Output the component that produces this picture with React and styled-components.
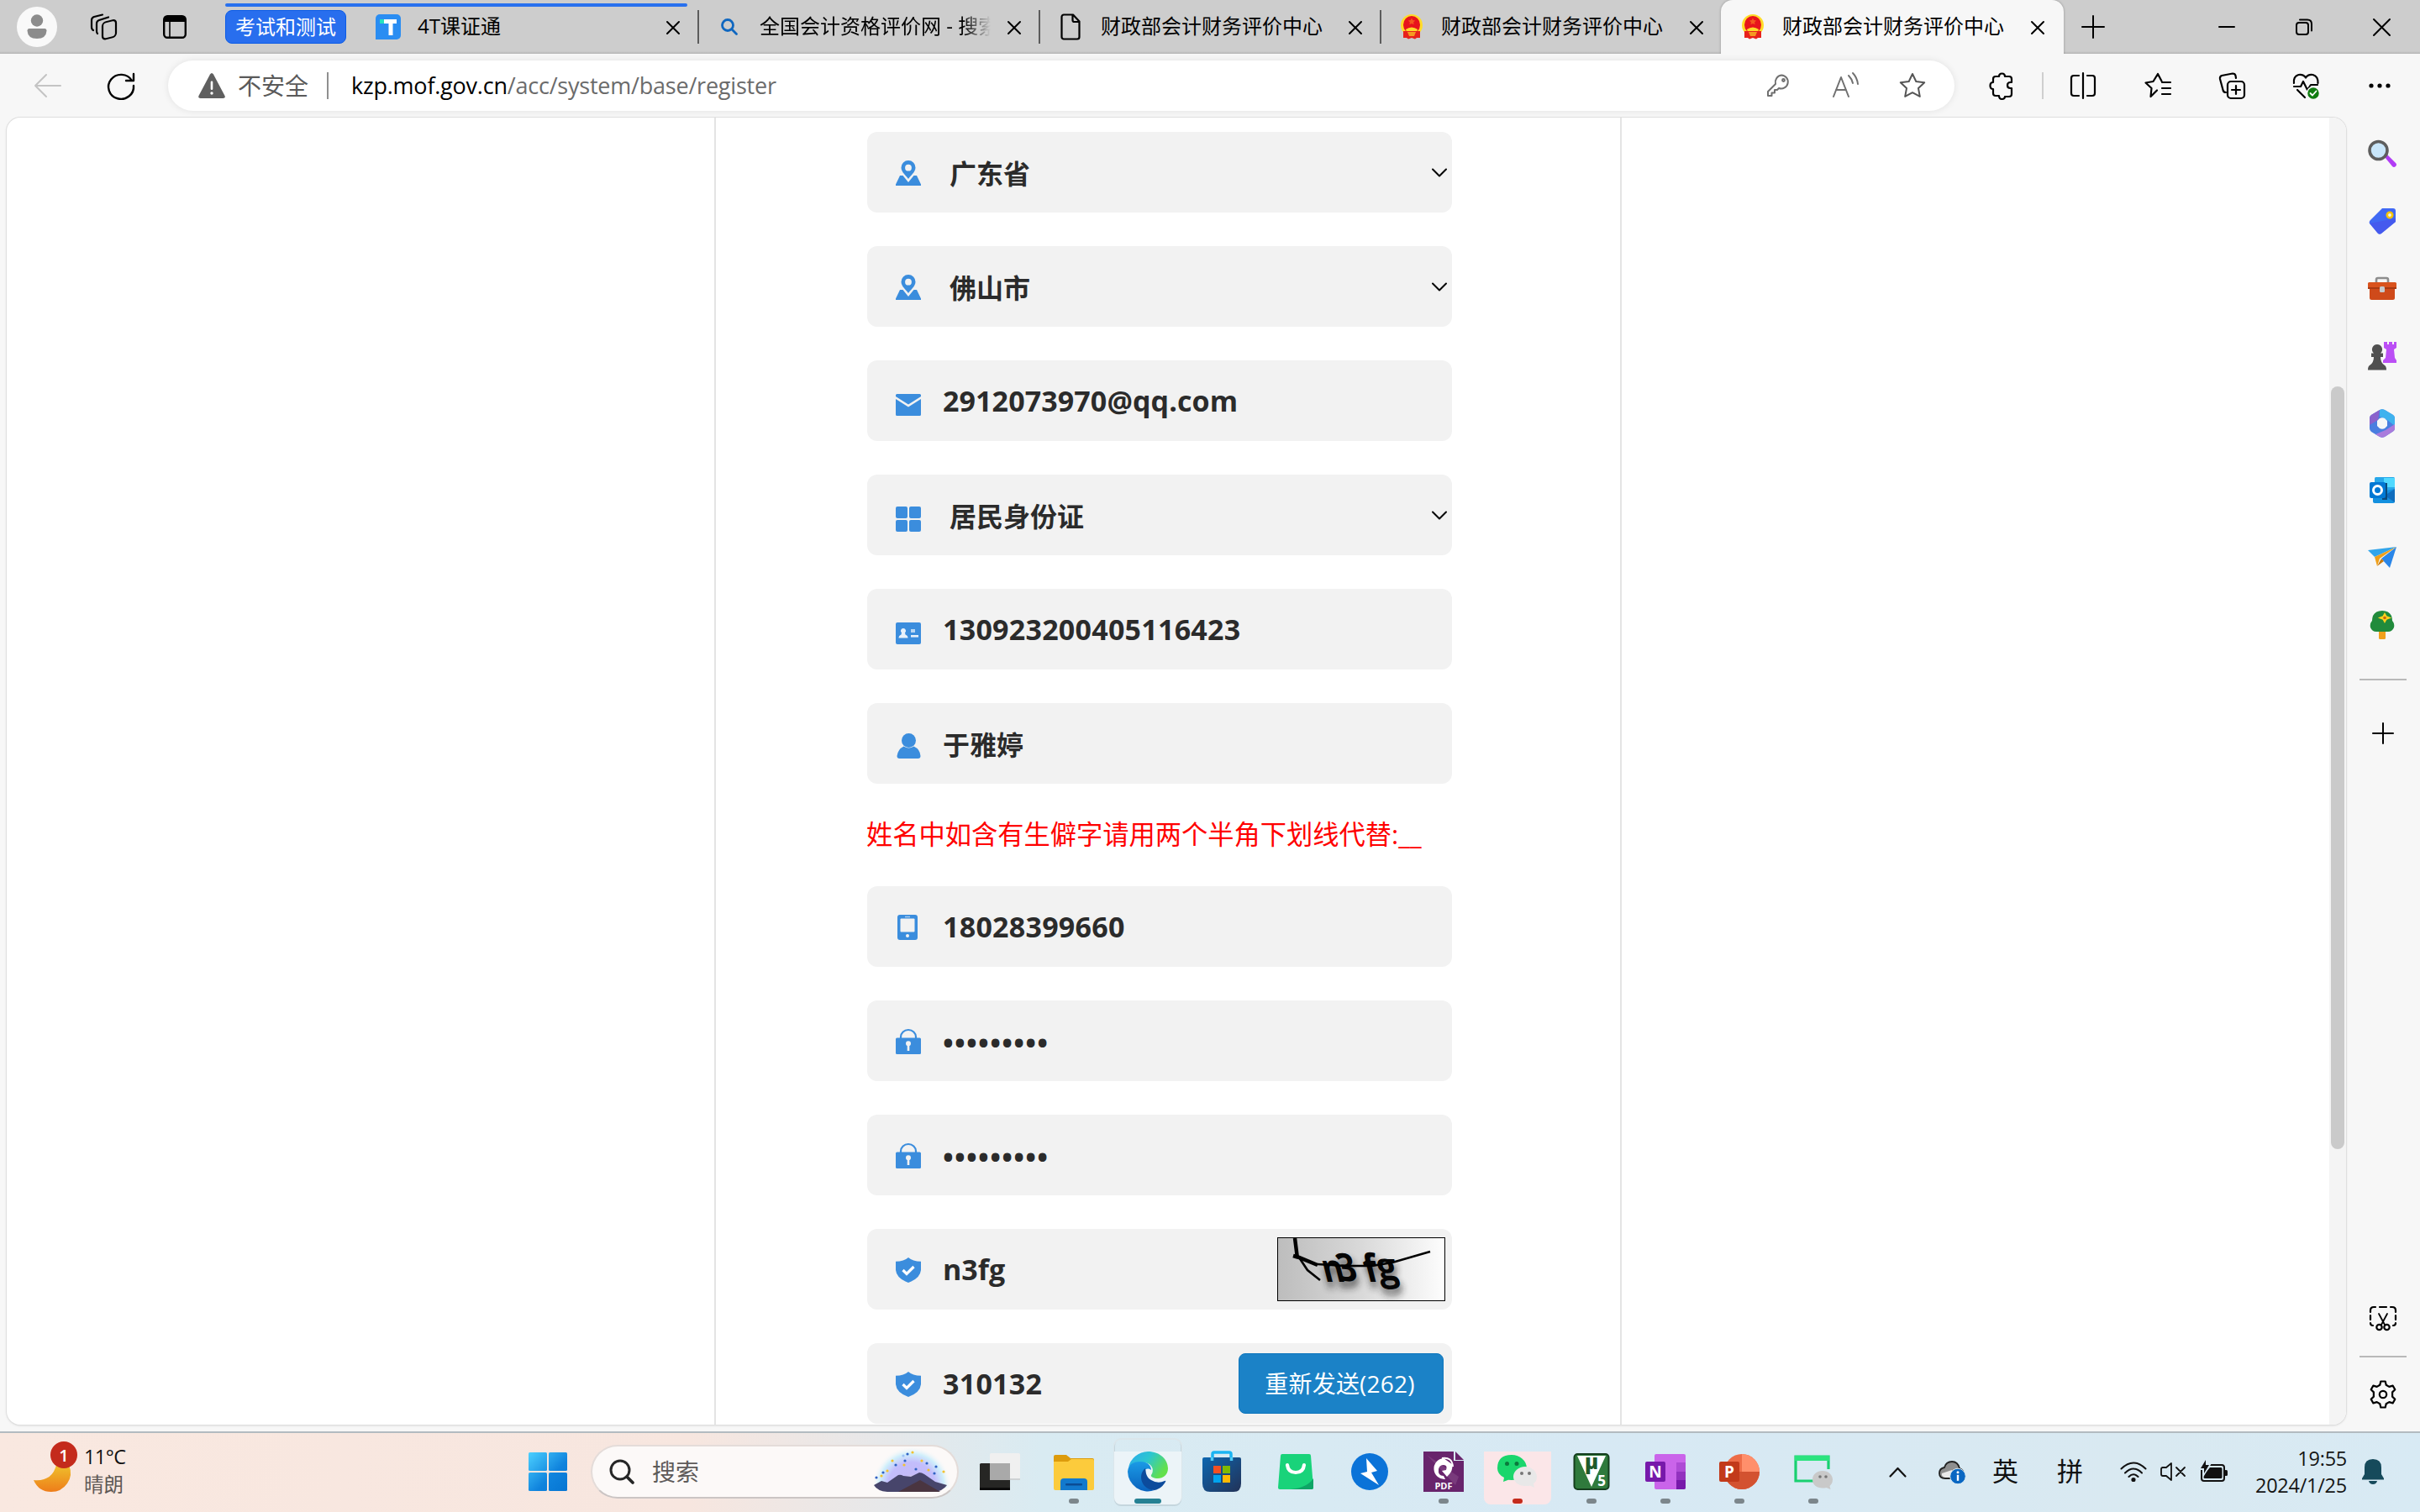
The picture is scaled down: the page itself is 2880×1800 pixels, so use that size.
import React from "react";
import styled, { createGlobalStyle, css } from "styled-components";

const Global = createGlobalStyle`
  * { box-sizing: border-box; }
  body { margin: 0; overflow: hidden; font-family: "Open Sans", "Noto Sans CJK SC", sans-serif; color: #000; }
  svg { display: block; flex: none; overflow: visible; }
`;

const Desktop = styled.div`
  width: 2880px;
  height: 1800px;
  display: flex;
  flex-direction: column;
  background: #f7f7f7;
`;

/* ---------- tab strip ---------- */
const TabStrip = styled.div`
  height: 64px;
  flex: none;
  display: flex;
  align-items: center;
  padding: 0 35px 0 20px;
  background: linear-gradient(#cdcdcd 61px, #b4b4b4 64px);
`;
const Avatar = styled.div`
  width: 48px;
  height: 48px;
  border-radius: 50%;
  background: #f9f9f9;
  display: flex;
  align-items: center;
  justify-content: center;
  margin-right: 39px;
`;
const StripIcon = styled.div`
  margin-right: ${(p) => p.$after}px;
`;
const TabGroup = styled.div`
  height: 64px;
  width: 564px;
  flex: none;
`;
const GroupLine = styled.div`
  width: 550px;
  height: 4px;
  margin: 4px 0 0;
  border-radius: 2px;
  background: #2870ee;
`;
const GroupRow = styled.div`
  display: flex;
  align-items: center;
  height: 48px;
`;
const GroupChip = styled.div`
  width: 144px;
  height: 40px;
  border-radius: 8px;
  background: #286eee;
  border: 1px solid #0b5be6;
  color: #fff;
  font-size: 24px;
  line-height: 37px;
  text-align: center;
  white-space: nowrap;
`;
const TabBox = styled.div`
  width: ${(p) => p.$width}px;
  height: ${(p) => (p.$active ? 64 : 48)}px;
  flex: none;
  display: flex;
  align-items: center;
  padding-left: ${(p) => p.$lead}px;
  ${(p) =>
    p.$active &&
    css`
      background: #f7f7f7;
      border-radius: 14px 14px 0 0;
      box-shadow: 0 0 3px rgba(0, 0, 0, 0.3);
      clip-path: inset(0 -4px 0 -4px);
    `}
`;
const TabIcon = styled.div`
  width: ${(p) => p.$width}px;
  flex: none;
`;
const TabTitle = styled.div`
  flex: 1;
  min-width: 0;
  font-size: 24px;
  line-height: 40px;
  height: 40px;
  margin-top: -2px;
  white-space: nowrap;
  overflow: hidden;
  ${(p) =>
    p.$fade &&
    css`
      mask-image: linear-gradient(90deg, #000 88%, transparent 100%);
    `}
`;
const TabClose = styled.div`
  width: 16px;
  margin: 2px 21px 0 20px;
`;
const TabRule = styled.div`
  width: ${(p) => (p.$collapsed ? 0 : 2)}px;
  height: 40px;
  background: ${(p) => (p.$hidden ? "transparent" : "#5c5c5c")};
`;
const NewTab = styled.div`
  margin-left: 21px;
  flex: 1;
`;
const WindowButtons = styled.div`
  display: flex;
  gap: 72px;
  align-items: center;
`;

/* ---------- address row ---------- */
const Toolbar = styled.div`
  height: 76px;
  flex: none;
  display: flex;
  align-items: center;
  padding-left: 40px;
`;
const AddressBar = styled.div`
  width: 2126px;
  height: 60px;
  margin-left: 40px;
  border-radius: 30px;
  background: #fff;
  box-shadow: 0 0 8px rgba(0, 0, 0, 0.09);
  display: flex;
  align-items: center;
  padding: 0 34px 0 36px;
`;
const Insecure = styled.div`
  font-size: 28px;
  line-height: 40px;
  color: #5a5a5a;
  margin: -1px 22px 0 15px;
`;
const Rule = styled.div`
  width: 2px;
  height: 32px;
  background: ${(p) => p.$tone};
`;
const Url = styled.div`
  margin: -1px 0 0 27px;
  flex: 1;
  font-size: 27px;
  letter-spacing: -0.22px;
  line-height: 40px;
  color: #6b6b6b;
  white-space: nowrap;
  b { font-weight: 400; color: #000; }
`;
const AddressActions = styled.div`
  display: flex;
  gap: 48px;
`;
const ToolSlot = styled.div`
  margin-left: ${(p) => p.$before}px;
`;

/* ---------- page ---------- */
const Body = styled.div`
  height: 1564px;
  flex: none;
  display: flex;
  padding-left: 8px;
`;
const PageFrame = styled.div`
  width: 2784px;
  height: 1556px;
  border-radius: 16px;
  background: #fff;
  box-shadow: 0 0 0 1px #dfdfdf, 0 1px 3px rgba(0, 0, 0, 0.15);
  overflow: hidden;
  display: flex;
`;
const PageArea = styled.div`
  flex: 1;
  display: flex;
  padding-left: 842px;
`;
const FormColumn = styled.main`
  width: 1080px;
  border-left: 2px solid #e4e4e4;
  border-right: 2px solid #e4e4e4;
  padding: 17px 0 0 180px;
`;
const Field = styled.div`
  width: 696px;
  height: 96px;
  margin-bottom: 40px;
  border-radius: 12px;
  background: #f2f2f2;
  display: flex;
  align-items: center;
  padding-left: 34px;
`;
const FieldIcon = styled.div`
  width: 30px;
  height: 96px;
  padding-top: ${(p) => p.$top}px;
`;
const FieldText = styled.div`
  flex: 1;
  padding-left: ${(p) => (p.$select ? 34 : 26)}px;
  padding-top: ${(p) => p.$drop || 0}px;
  font-weight: 700;
  font-size: ${(p) => (p.$cjk ? 32 : 34)}px;
  letter-spacing: ${(p) => p.$spacing || 0}px;
  line-height: 48px;
  color: #2b2b2b;
  white-space: nowrap;
`;
const Chevron = styled.div`
  margin: 0 6px 0 0;
`;
const Captcha = styled.div`
  width: 200px;
  height: 76px;
  margin: 0 8px 0 0;
  border: 1px solid #000;
  background: linear-gradient(90deg, #bdbdbd, #d9d9d9 50%, #fdfdfd);
  overflow: hidden;
`;
const Resend = styled.button`
  width: 244px;
  height: 72px;
  margin: 0 10px 0 0;
  padding: 0 3px 0 0;
  border: 1px solid #0e76bd;
  border-radius: 8px;
  background: #1b82c7;
  color: #fff;
  font: 400 28px/40px "Open Sans", "Noto Sans CJK SC", sans-serif;
  letter-spacing: 0.2px;
`;
const Hint = styled.div`
  height: 41px;
  margin: 0 0 41px -1px;
  font-size: 31.25px;
  line-height: 41px;
  color: #f00;
  white-space: nowrap;
`;
const ScrollTrack = styled.div`
  width: 20px;
  background: #f4f4f4;
  padding: 320px 2px 0;
`;
const ScrollThumb = styled.div`
  height: 908px;
  border-radius: 8px;
  background: #cacaca;
`;

/* ---------- side bar ---------- */
const SideBar = styled.aside`
  width: 88px;
  display: flex;
  flex-direction: column;
  align-items: center;
  padding: 27px 0 27px;
`;
const SideApps = styled.div`
  display: flex;
  flex-direction: column;
  gap: 46px;
  margin-right: 2px;
`;
const SideRule = styled.div`
  width: 56px;
  height: 2px;
  margin: ${(p) => p.$margin};
  background: #b9b9b9;
`;
const SideGap = styled.div`
  flex: 1;
`;

/* ---------- task bar ---------- */
const TaskBar = styled.footer`
  height: 96px;
  flex: none;
  border-top: 2px solid #b3bbc0;
  padding: 0 0 2px 40px;
  display: flex;
  align-items: center;
  background: linear-gradient(90deg, #f9e8e0 0, #f7e6df 820px, #e6e8ea 1060px, #d9ebf2 1240px, #d7e9f4 1900px, #d9e9f1 2550px, #d8eaf4 2880px);
`;
const WeatherText = styled.div`
  width: 527px;
  padding-left: 14px;
  margin-top: -3px;
  font-size: 23.5px;
  line-height: 33px;
  letter-spacing: -0.6px;
  color: #111;
  span { display: block; font-size: 23.5px; color: #5d5855; letter-spacing: 0; }
`;
const SearchBox = styled.div`
  width: 438px;
  height: 64px;
  margin: 0 9px 0 28px;
  border: 2px solid #e4dcd9;
  border-bottom-color: #cbc5c4;
  border-radius: 32px;
  background: #fcf9f8;
  display: flex;
  align-items: center;
  padding: 0 8px 0 20px;
`;
const SearchLabel = styled.div`
  flex: 1;
  padding-left: 21px;
  font-size: 28px;
  line-height: 40px;
  color: #5e5b5a;
`;
const TaskApps = styled.div`
  display: flex;
  gap: 8px;
`;
const TaskSlot = styled.div`
  width: 80px;
  height: 78px;
  padding-top: 15px;
  display: flex;
  flex-direction: column;
  align-items: center;
  gap: 8px;
  border-radius: 8px;
  background: ${(p) => p.$tint || "transparent"};
  background-clip: content-box, padding-box;
  box-shadow: ${(p) => (p.$raised ? "0 2px 0 #c5d6de, 0 0 0 1px #dbe6eb" : "none")};
`;
const RunDot = styled.div`
  width: ${(p) => (p.$wide ? 32 : 12)}px;
  height: 6px;
  border-radius: 3px;
  background: ${(p) => p.$tone};
`;
const Tray = styled.div`
  flex: 1;
  display: flex;
  align-items: center;
  padding-left: 50px;
`;
const TraySlot = styled.div`
  margin-left: ${(p) => p.$before}px;
`;
const TrayGlyph = styled.div`
  margin: -3px 0 0 ${(p) => p.$before}px;
  width: 30px;
  font-size: 31px;
  line-height: 40px;
  color: #111;
`;
const Clock = styled.div`
  width: 112px;
  margin: 0 18px 0 30px;
  font-size: 23.5px;
  line-height: 32px;
  letter-spacing: -0.25px;
  text-align: right;
  white-space: nowrap;
  color: #151515;
`;

/* ---------- icons ---------- */
const Line = ({ w = 32, h = 32, c = "#000", s = 2, children }) => (
  <svg width={w} height={h} viewBox={`0 0 ${w} ${h}`} fill="none" stroke={c} strokeWidth={s} strokeLinecap="round" strokeLinejoin="round">
    {children}
  </svg>
);
const Solid = ({ w = 34, h = 34, children }) => (
  <svg width={w} height={h} viewBox={`0 0 ${w} ${h}`}>{children}</svg>
);

const CloseIcon = ({ size = 16, s = 2 }) => (
  <Line w={size} h={size} s={s}><path d={`M1 1 L${size - 1} ${size - 1} M${size - 1} 1 L1 ${size - 1}`} /></Line>
);
const Emblem = () => (
  <Solid w={28} h={30}>
    <ellipse cx="14" cy="13" rx="13" ry="13" fill="#ffdc28" />
    <ellipse cx="14" cy="12.5" rx="10" ry="10.5" fill="#e8141c" />
    <path d="M14 4.500l1.300 2.600 2.800.3-2 2 .5 2.800L14 10.900l-2.600 1.300.5-2.800-2-2 2.800-.3z" fill="#f4581e" />
    <path d="M7 18q7-5 14 0l-1 3H8z" fill="#ffd92b" />
    <path d="M4 20h20v8h-4l-2 1.500-4-1.500-4 1.500-2-1.500H4z" fill="#e8221c" />
    <path d="M9 21h10l-2 5h-6z" fill="#f59a22" />
  </Solid>
);
const T4Icon = () => (
  <Solid w={30} h={30}>
    <path d="M5 0h20a5 5 0 0 1 5 5v20a5 5 0 0 1-5 5H0V5a5 5 0 0 1 5-5z" fill="#2a8df2" />
    <path d="M10 6h15v5h-4.500v14h-5V11H10z" fill="#fff" />
    <rect x="5" y="6" width="5" height="5" fill="#25e2c0" />
  </Solid>
);
const PageIcon = () => (
  <Line w={24} h={32} s={2.2}><path d="M4 1.500h11l7.500 8V28a2.500 2.500 0 0 1-2.500 2.500H4A2.500 2.500 0 0 1 1.500 28V4A2.500 2.500 0 0 1 4 1.500zM14.500 2v6a2 2 0 0 0 2 2h6" /></Line>
);
const BlueSearch = () => (
  <Line w={20} h={20} c="#0f67c0" s={2.8}><circle cx="8" cy="8" r="6.500" /><path d="M12.800 12.800L18.500 18.500" /></Line>
);

const BLUE = "#3b8ddd";
const PinIcon = () => (
  <Solid w={30} h={30}>
    <path d="M15 0a8.500 8.500 0 0 1 8.500 8.500C23.500 14 17.500 18 15 22 12.500 18 6.500 14 6.500 8.500A8.500 8.500 0 0 1 15 0zm0 4.800a3.900 3.900 0 1 0 0 7.800 3.900 3.900 0 0 0 0-7.800z" fill={BLUE} />
    <path d="M5 18h3.500L15 26l6.500-8H25l5 10.500V30H0v-1.500z" fill={BLUE} />
  </Solid>
);
const MailIcon = () => (
  <Solid w={30} h={26}>
    <path d="M1.500 0h27A1.500 1.500 0 0 1 30 1.500V3L15 12.500 0 3V1.500A1.500 1.500 0 0 1 1.500 0z" fill={BLUE} />
    <path d="M0 6l15 9.500L30 6v18.500a1.500 1.500 0 0 1-1.500 1.500h-27A1.500 1.500 0 0 1 0 24.500z" fill={BLUE} />
  </Solid>
);
const GridIcon = () => (
  <Solid w={30} h={30}>
    {[[0, 0], [16, 0], [0, 16], [16, 16]].map(([x, y]) => <rect key={`${x}-${y}`} x={x} y={y} width="14" height="14" rx="2" fill={BLUE} />)}
  </Solid>
);
const CardIcon = () => (
  <Solid w={30} h={26}>
    <rect width="30" height="26" rx="2" fill={BLUE} />
    <path d="M9 7a3 3 0 0 1 2 5.300l.5 2.200q3 1 3 4H3.500q0-3 3-4l.5-2.200A3 3 0 0 1 9 7z" fill="#e8f1fa" />
    <rect x="18" y="8" width="5" height="4" fill="#b8d6f3" />
    <rect x="18" y="15" width="9" height="2.600" fill="#e8f1fa" />
  </Solid>
);
const PersonIcon = () => (
  <Solid w={30} h={30}>
    <circle cx="15.500" cy="8.500" r="8.500" fill={BLUE} />
    <path d="M9.500 15.500q6 4 12 0Q29 19 29.500 27q0 3-3 3h-22q-3 0-3-3Q2.500 19 9.500 15.500z" fill={BLUE} />
  </Solid>
);
const PhoneIcon = () => (
  <Solid w={30} h={30}>
    <rect x="2" width="24" height="30" rx="3" fill={BLUE} />
    <rect x="5.500" y="4.500" width="17" height="16" rx="1" fill="#f2f2f2" />
    <rect x="11" y="1.800" width="6" height="1.400" fill="#a9cdf0" />
    <circle cx="14" cy="25" r="2" fill="#f2f2f2" />
  </Solid>
);
const LockIcon = () => (
  <Solid w={30} h={30}>
    <path d="M6 12V9.500a9 8.500 0 0 1 18 0V12" fill="none" stroke={BLUE} strokeWidth="2.200" />
    <rect y="10.500" width="30" height="19.500" rx="1.500" fill={BLUE} />
    <circle cx="15" cy="17.300" r="3" fill="#f2f2f2" />
    <rect x="13.700" y="18" width="2.600" height="8" fill="#f2f2f2" />
  </Solid>
);
const ShieldIcon = () => (
  <Solid w={30} h={30}>
    <path d="M15 0q5 4.500 15 4.800V15Q29 25 15 30 1 25 0 15V4.800Q10 4.500 15 0z" fill={BLUE} />
    <path d="M8.500 15l4.500 4.500 8.500-8.500" fill="none" stroke="#fff" strokeWidth="3.200" />
  </Solid>
);
const SelectArrow = () => (
  <Line w={18} h={11} s={2}><path d="M1 1.500l8 8 8-8" /></Line>
);

const captchaLetters = [
  ["n", 56, 52, 0.85],
  ["3", 74, 51, 0.86],
  ["f", 106, 52, 0.9],
  ["g", 121, 50, 0.92],
];
const CaptchaLetters = () =>
  captchaLetters.map(([ch, x, y, sx]) => (
    <text key={ch} transform={`translate(${x} ${y}) skewX(14) scale(${sx} 1)`}>{ch}</text>
  ));
const CaptchaDrawing = () => (
  <svg width="198" height="74" viewBox="0 0 198 74">
    <defs><filter id="soft" x="-20%" y="-40%" width="140%" height="200%"><feGaussianBlur stdDeviation="4" /></filter></defs>
    <g fontFamily="Open Sans, sans-serif" fontWeight="700" fontSize="46">
      <g filter="url(#soft)" fill="#222" opacity=".75" transform="translate(2 7)"><CaptchaLetters /></g>
      <g fill="#050505"><CaptchaLetters /></g>
    </g>
    <path d="M20 0l3 24" stroke="#000" strokeWidth="4.500" fill="none" />
    <path d="M18 21l7 2 22 9" stroke="#000" strokeWidth="4.500" fill="none" />
    <path d="M25 23l10 15 15 12" stroke="#000" strokeWidth="2.600" fill="none" />
    <path d="M47 31l32 2h33l24-4 45-13" stroke="#000" strokeWidth="2.600" fill="none" />
  </svg>
);

const SideSearch = () => (
  <Solid>
    <path d="M20 20l3-3 10 10q2 2 0 4t-4 0z" fill="#b13cf5" />
    <circle cx="12.500" cy="12" r="10.500" fill="#c9e6fa" stroke="#5e5e5e" strokeWidth="3.600" />
  </Solid>
);
const SideTag = () => (
  <Solid>
    <path d="M17 1h13q3 0 3 3v13L16 31q-2 1.500-4 0L2 19q-1-2 1-4z" fill="#4069f4" />
    <path d="M2 19l31-6v4L16 31q-2 1.500-4 0z" fill="#4a50ea" opacity=".6" />
    <circle cx="26" cy="9" r="3.200" fill="#f2f2f2" stroke="#f5c400" strokeWidth="2.600" />
  </Solid>
);
const SideBox = () => (
  <Solid>
    <path d="M10 10V6q0-2 2-2h10q2 0 2 2v4" fill="none" stroke="#8d8d8d" strokeWidth="2.600" />
    <rect x="2" y="12" width="30" height="18" rx="2.500" fill="#cf4a1a" />
    <rect x="0" y="9" width="34" height="8" rx="1.500" fill="#d9531d" />
    <rect x="0" y="15" width="34" height="2" fill="#a93a12" />
    <rect x="14" y="14" width="6" height="7" rx="1.500" fill="#c6c9cc" />
  </Solid>
);
const SideGames = () => (
  <Solid>
    <path d="M19 0h4v3h2V0h4v3h2V0h3v7l-3 2 1 10 2 3v3H18v-3l3-3 1-10-3-2z" fill="#bb4ff5" />
    <path d="M11 3a6 6 0 0 1 4 10.500h3V18h-3q0 7 5 10 2 1 2 5.500H0Q0 29 2 28q5-3 5-10H4v-4.500h3A6 6 0 0 1 11 3z" fill="#505050" />
  </Solid>
);
const Side365 = () => (
  <Solid>
    <path d="M14 1Q17-.5 20 1l10 6q2 1.500 2 4v12q0 2-2 3.500L20 33q-3 1.500-6 0L4 27q-2-1.500-2-4V11q0-2.500 2-4z" fill="#4a7ee0" />
    <path d="M14 1Q17-.5 20 1l10 6q2 1.500 2 4v9l-9-7-9-4z" fill="#3fb2ee" />
    <path d="M14 1L4 7q-2 1.500-2 4v8l10-6z" fill="#8a62cc" />
    <path d="M32 18v5q0 2-2 3.500L20 33q-3 1.500-6 0l-5-3 12-5z" fill="#a97bdc" />
    <path d="M14 11q3-1.500 6 0l3 3v6l-3 3q-3 1.500-6 0l-3-3v-6z" fill="#f7f7f7" />
  </Solid>
);
const SideOutlook = () => (
  <Solid>
    <rect x="8" y="1" width="24" height="22" rx="1.500" fill="#28a8ea" />
    <rect x="19" y="2" width="13" height="11" fill="#50d9ff" />
    <path d="M6 20l26-5v15q0 2-2 2H8q-2 0-2-2z" fill="#1490df" />
    <path d="M32 15v16L20 23z" fill="#0f6cbd" />
    <rect x="17" y="8" width="6" height="20" fill="#0a4a7c" />
    <rect x="2" y="7" width="19" height="19" rx="2" fill="#0078d4" />
    <circle cx="11.500" cy="16.500" r="5" fill="none" stroke="#fff" strokeWidth="3" />
  </Solid>
);
const SidePlane = () => (
  <Solid>
    <path d="M0 8L34 4 8 16z" fill="#32a5ea" />
    <path d="M8 16L34 4 14 18l-3 9z" fill="#f0a019" />
    <path d="M16 18L34 4 26 29z" fill="#2a86e8" />
    <path d="M11 27l5-9 3 3z" fill="#c97a0c" />
  </Solid>
);
const SideTree = () => (
  <Solid>
    <rect x="13" y="22" width="8" height="12" rx="1.500" fill="#f0a01c" />
    <path d="M17 0q8 0 11 6 1 3 1 6 3 3 2 8-2 5-7 5H10q-5 0-7-5-1-5 2-8 0-3 1-6 3-6 11-6z" fill="#218b3c" />
    <path d="M20 3.500l2 3.500 4 1.500-4 1.500-2 3.500-2-3.500-4-1.500 4-1.500z" fill="#ffd21f" stroke="#ffd21f" strokeWidth="1.500" />
    <circle cx="20" cy="8.500" r="1.800" fill="#c8650b" />
  </Solid>
);
const SnipIcon = () => (
  <Line w={34} h={34} s={2.2}>
    <path d="M2 9V7q0-4 4-4h2M13 3h8M26 3h2q4 0 4 4v2M32 13v5M2 13v5M2 22q0 3 3 3M32 22q0 3-3 3" />
    <path d="M12 11l7 13M22 11l-7 13" strokeWidth="1.800" />
    <circle cx="12.500" cy="27" r="3.200" /><circle cx="21.500" cy="27" r="3.200" />
  </Line>
);
const GearIcon = () => (
  <Line w={34} h={34} s={2.2}>
    <path d="M14.300 1.500h5.400l1 4.300 3.600 2.100 4.300-1.300 2.700 4.700-3.200 3.100v5.200l3.200 3.100-2.700 4.700-4.300-1.300-3.600 2.100-1 4.300h-5.400l-1-4.300-3.600-2.100-4.300 1.300-2.700-4.700 3.200-3.100v-5.200l-3.200-3.100 2.700-4.700 4.300 1.300 3.600-2.100z" />
    <circle cx="17" cy="17" r="4.200" />
  </Line>
);

const SpeechIcon = () => (
  <Line c="#707070" s={2}><path d="M2 29L11 6l9 23M5 21h12M20 4q4 4 5 9M25 1q5 5 6 13" /></Line>
);
const KeyIcon = () => (
  <Line c="#707070" s={2}><path d="M20 3.500a8 8 0 1 1-3 15.500l-2 2h-3v3.500H8.500V28H4v-5L13 14a8.500 8.500 0 0 1 7-10.500z" /><circle cx="22.500" cy="9.500" r="1.400" /></Line>
);
const StarIcon = () => (
  <Line c="#555" s={2}><path d="M16 2l4.300 9 9.900 1.300-7.200 6.800 1.800 9.800L16 24.200 7.200 28.900 9 19.100 1.800 12.300 11.700 11z" /></Line>
);
const PuzzleIcon = () => (
  <Line s={2.2}><path d="M9 5h4q0-3.500 3.500-3.500T20 5h5q3 0 3 3v4h-1.500q-3.500 0-3.500 3.500t3.500 3.500H28v7q0 3-3 3h-5q0 3-3.500 3T13 28H9q-3 0-3-3v-5q-3.500 0-3.500-4T6 12V8q0-3 3-3z" /></Line>
);
const SplitIcon = () => (
  <Line s={2.2}><path d="M11 4H5Q2 4 2 7v18q0 3 3 3h6M21 4h6q3 0 3 3v18q0 3-3 3h-6M16 1v30" /></Line>
);
const FavIcon = () => (
  <Line s={2.2}><path d="M15 21.500L7.500 29l1-10L1.500 12.500l9-1.500L16 2l4.500 8.500M21 12h10M21 19h10M21 26h10" /></Line>
);
const CollectIcon = () => (
  <Line s={2.2}><path d="M9 24q-3 0-3.500-3L2 8q-.5-3 2-4L17 1.500q3 0 3.500 2.500l.5 3" /><rect x="11" y="11" width="20" height="20" rx="4" /><path d="M21 16v10M16 21h10" /></Line>
);
const HeartIcon = () => (
  <svg width="34" height="32" viewBox="0 0 34 32" fill="none" stroke="#000" strokeWidth="2.200" strokeLinecap="round" strokeLinejoin="round">
    <path d="M2 13Q1 5 7.500 3 13 2 16 6.500 19 2 24.500 3 31 5 30.500 13M2 17h8l3-6 5 10 4-6h8M6 21l9 9" />
    <circle cx="25" cy="25" r="7.500" fill="#107c10" stroke="#f7f7f7" strokeWidth="1.500" />
    <path d="M21.500 25l2.500 2.500 4.500-5" stroke="#fff" strokeWidth="1.800" />
  </svg>
);

const MoonIcon = () => (
  <svg width="46" height="60" viewBox="0 0 46 60">
    <defs><linearGradient id="moon" x1="0" y1="0" x2="0" y2="1"><stop offset="0" stopColor="#efc02c" /><stop offset="1" stopColor="#ee7d1a" /></linearGradient></defs>
    <g transform="translate(0 -6)">
      <path d="M0 42q22 2 27-18 8 1 15 0 5 12-2 22-7 10-19 10Q6 56 0 42z" transform="translate(0 4)" fill="url(#moon)" />
      <circle cx="36" cy="16" r="16" fill="#c42b1c" />
      <text x="36" y="23.500" textAnchor="middle" fontFamily="Open Sans, sans-serif" fontWeight="600" fontSize="20" fill="#fff">1</text>
    </g>
  </svg>
);
const StartIcon = () => (
  <svg width="46" height="46" viewBox="0 0 46 46">
    <defs><linearGradient id="win" gradientUnits="userSpaceOnUse" x1="0" y1="0" x2="46" y2="46"><stop offset="0" stopColor="#4cd0ff" /><stop offset=".6" stopColor="#0f83dd" /><stop offset="1" stopColor="#0675d2" /></linearGradient></defs>
    <g fill="url(#win)"><rect width="22" height="22" rx="1.500" /><rect x="24" width="22" height="22" rx="1.500" /><rect y="24" width="22" height="22" rx="1.500" /><rect x="24" y="24" width="22" height="22" rx="1.500" /></g>
  </svg>
);
const sparks = [[4, 32, "#2f62c4"], [12, 26, "#2f62c4"], [17, 24, "#f2c230"], [10, 30, "#f2c230"], [23, 12, "#f2c230"], [27, 17, "#2f62c4"], [36, 6, "#9cc0f5"], [38, 12, "#2f62c4"], [37, 17, "#f2c230"], [41, 4, "#2f62c4"], [47, 2, "#f2c230"], [51, 22, "#2f62c4"], [58, 12, "#f2c230"], [64, 15, "#2f62c4"], [66, 23, "#f2c230"], [75, 19, "#2f62c4"], [73, 27, "#2f62c4"], [84, 25, "#f2c230"]];
const MountainArt = () => (
  <svg width="92" height="50" viewBox="0 0 92 50">
    <defs>
      <radialGradient id="glow" cx=".5" cy=".5" r=".5"><stop offset="0" stopColor="#e9e6a8" /><stop offset=".3" stopColor="#c4bbf8" /><stop offset=".6" stopColor="#c3bdfc" /><stop offset=".82" stopColor="#cfeffb" /><stop offset="1" stopColor="#fcf9f8" stopOpacity="0" /></radialGradient>
      <clipPath id="sky"><rect x="0" y="-6" width="92" height="50" /></clipPath>
    </defs>
    <circle cx="46" cy="42" r="47" fill="url(#glow)" clipPath="url(#sky)" />
    <path d="M1 41l9-5 7 2 13-9q3-1 6 1l9 1 10-5q3 0 6 2l13 9 14 4q-5 7-15 8H17Q5 48 1 41z" fill="#47456b" />
    <path d="M30 49l26-14 24 14z" fill="#4a3540" />
    {sparks.map(([x, y, c]) => <circle key={`${x}-${y}`} cx={x} cy={y} r="1.600" fill={c} />)}
  </svg>
);
const MagIcon = () => (
  <Line w={30} h={30} c="#262626" s={3}><circle cx="13" cy="13" r="11" /><path d="M21 21l7 7" strokeWidth="3.800" /></Line>
);

const TaskViewIcon = () => (
  <Solid w={48} h={48}>
    <rect y="14" width="36" height="32" rx="1.500" fill="#262624" /><rect y="43" width="36" height="3" fill="#0b0b0b" />
    <rect x="12" y="2" width="36" height="32" rx="1.500" fill="#f0f0f0" /><rect x="12" y="14" width="24" height="20" fill="#a9a9a9" />
    <path d="M36 33h12" stroke="#cfd2d4" strokeWidth="2" />
  </Solid>
);
const FolderIcon = () => (
  <Solid w={48} h={48}>
    <path d="M0 6q0-2 2-2h13l5 4h26q2 0 2 2v6H0z" fill="#dd9b0c" />
    <path d="M0 12h17l4-3h25q2 0 2 2v33q0 2-2 2H2q-2 0-2-2z" fill="#fccb3c" />
    <path d="M8 46V36q0-4 4-4h24q4 0 4 4v10z" fill="#1279cd" /><rect x="14" y="38" width="20" height="2.400" rx="1" fill="#0b4c94" />
  </Solid>
);
const EdgeIcon = () => (
  <svg width="48" height="48" viewBox="0 0 48 48">
    <defs>
      <linearGradient id="eg" x1="0" y1="0" x2="1" y2=".5"><stop offset="0" stopColor="#2aa9f0" /><stop offset=".5" stopColor="#2cc6d0" /><stop offset="1" stopColor="#62e04c" /></linearGradient>
      <linearGradient id="eb" x1="0" y1="0" x2="0" y2="1"><stop offset="0" stopColor="#1b9be6" /><stop offset="1" stopColor="#0a62bd" /></linearGradient>
    </defs>
    <path d="M1 19A24 24 0 0 1 24 0c15 0 24 10 24 20 0 8-6 12-12 12-5 0-9-2-8-4 4-5 2-15-10-15-8 0-14 2-17 6z" fill="url(#eg)" />
    <path d="M0 24q1-12 15-12c10 0 13 6 13 10-7-5-12 3-8 12 3 7 8 12 12 12A24 24 0 0 1 0 24z" fill="url(#eb)" />
    <path d="M21 20c-10 8-4 26 11 26 6-1 11-6 13-10q1-2-1-1-8 4-16-1c-7-4-6-10-7-14z" fill="#0c4b9c" />
  </svg>
);
const StoreIcon = () => (
  <Solid w={48} h={48}>
    <path d="M13 12V3q0-2 2-2h18q2 0 2 2v9" fill="none" stroke="#1bb4f2" strokeWidth="3.500" />
    <defs><linearGradient id="st" x1="0" y1="0" x2="1" y2="1"><stop offset="0" stopColor="#0d66b0" /><stop offset="1" stopColor="#223257" /></linearGradient></defs>
    <path d="M1 9q0-2 2-2h42q2 0 2 2v29q0 10-9 10H10Q1 48 1 38z" fill="url(#st)" />
    <path d="M12.500 11V7M35.500 11V7" stroke="#4ccbf7" strokeWidth="3.500" />
    <rect x="14" y="17" width="9" height="9" fill="#f25022" /><rect x="25" y="17" width="9" height="9" fill="#7fba00" /><rect x="14" y="28" width="9" height="9" fill="#00a4ef" /><rect x="25" y="28" width="9" height="9" fill="#ffb900" />
  </Solid>
);
const GreenBagIcon = () => (
  <Solid w={48} h={48}>
    <path d="M8 3h32q2 0 2 2l3 38q0 2-2 2H5q-2 0-2-2L6 5q0-2 2-2z" fill="#19d37a" />
    <path d="M45 32v11q0 2-2 2H18q20-2 27-13z" fill="#0ea566" />
    <path d="M14 16q1 9 10 9t10-9" fill="none" stroke="#fff" strokeWidth="4.200" strokeLinecap="round" />
  </Solid>
);
const BoltIcon = () => (
  <Solid w={48} h={48}><circle cx="24" cy="24" r="22" fill="#0b73d8" /><path d="M20 8l13 15-7 2 9 15-22-14 8-2z" fill="#fff" /></Solid>
);
const PdfIcon = () => (
  <Solid w={48} h={48}>
    <path d="M0 0h36v11h12v37H0z" fill="#68246c" /><path d="M38 0l10 10H38z" fill="#68246c" />
    <path d="M4 4l38 26-4 10z" fill="#8a4f8c" opacity=".5" />
    <path d="M24 8a12 12 0 1 0 2 25l-2-4q-7 0-6-8 1-5 6-5 5 0 3 6l-5 1 6 7q8-7 6-15z" fill="#fff" />
    <path d="M22 8q12-2 13 10" fill="none" stroke="#fff" strokeWidth="2" />
    <text x="24" y="45" textAnchor="middle" fontFamily="Open Sans, sans-serif" fontWeight="700" fontSize="11" fill="#fff">PDF</text>
  </Solid>
);
const WeChatIcon = () => (
  <Solid w={48} h={48}>
    <path d="M17 4c10 0 18 7 18 16 0 8-8 14-18 14l-4-.3L7 36l1-5Q0 27 0 20 0 4 17 4z" fill="#1ad66c" />
    <circle cx="11.500" cy="14.500" r="2.500" fill="#0a7a3c" /><circle cx="23" cy="14.500" r="2.500" fill="#0a7a3c" />
    <path d="M33 18c8 0 14 6 14 12 0 4-2 7-4 8l1 5-5-2.500q-2 .5-6 .5c-8 0-14-5-14-11s6-12 14-12z" fill="#e8e8e8" />
    <circle cx="29" cy="26" r="2" fill="#777" /><circle cx="38" cy="26" r="2" fill="#777" />
  </Solid>
);
const MuIcon = () => (
  <Solid w={48} h={48}>
    <rect x="3.500" y="3" width="41" height="42" rx="4" fill="#2f7a3c" stroke="#153e1d" strokeWidth="2" />
    <path d="M7 5h34L24 42z" fill="#fff" />
    <text x="24" y="21" textAnchor="middle" fontFamily="Open Sans, sans-serif" fontWeight="800" fontSize="24" fill="#1f5a2b">µ</text>
    <text x="36" y="41" textAnchor="middle" fontFamily="Open Sans, sans-serif" fontWeight="700" fontSize="17" fill="#fff">5</text>
  </Solid>
);
const OneNoteIcon = () => (
  <Solid w={48} h={48}>
    <rect x="11" y="3" width="37" height="42" rx="2" fill="#ca64ea" /><rect x="37" y="13" width="11" height="11" fill="#ae4bd5" /><rect x="37" y="24" width="11" height="10" fill="#9332bf" /><path d="M37 34h11v9q0 2-2 2h-9z" fill="#7719aa" />
    <rect x="0" y="12" width="24" height="24" rx="2" fill="#7719aa" />
    <text x="12" y="31" textAnchor="middle" fontFamily="Open Sans, sans-serif" fontWeight="700" fontSize="19" fill="#fff">N</text>
  </Solid>
);
const PptIcon = () => (
  <Solid w={48} h={48}>
    <circle cx="27" cy="24" r="21" fill="#ed6c47" /><path d="M27 3a21 21 0 0 1 21 21H27z" fill="#ff8f6b" /><path d="M6 24h42a21 21 0 0 1-42 0z" fill="#d35230" />
    <rect x="0" y="12" width="24" height="24" rx="2" fill="#c23a1a" />
    <text x="12" y="31" textAnchor="middle" fontFamily="Open Sans, sans-serif" fontWeight="700" fontSize="19" fill="#fff">P</text>
  </Solid>
);
const ChatWindowIcon = () => (
  <Solid w={48} h={48}>
    <path d="M42 21V6H3v29h22" fill="none" stroke="#18d070" strokeWidth="3.200" /><rect x="2" y="5" width="41" height="6" fill="#2be37e" />
    <path d="M35 23c7 0 12 5 12 10.500 0 4-2 6-3.500 7.500l1 4-5-2q-2 .5-4.500.5c-7 0-12-4-12-10S28 23 35 23z" fill="#c9c9c9" />
    <circle cx="32" cy="30" r="1.800" fill="#777" /><circle cx="39" cy="30" r="1.800" fill="#777" />
  </Solid>
);

const CloudIcon = () => (
  <Solid w={32} h={28}>
    <path d="M8 22q-7 0-7-6 0-6 6-7 2-7 9-7t9 8q5 2 5 7l-6 5z" fill="#8f8f8f" stroke="#222" strokeWidth="1.800" />
    <path d="M8 21q-5-1-4-5l12-4 6 9z" fill="#e9e9e9" />
    <circle cx="23" cy="19.500" r="9.300" fill="#0a67c2" stroke="#d8eaf4" strokeWidth="1" />
    <rect x="21.800" y="17.800" width="2.400" height="7" fill="#fff" /><circle cx="23" cy="14.800" r="1.500" fill="#fff" />
  </Solid>
);
const WifiIcon = () => (
  <Line w={32} h={26} c="#111" s={2}><path d="M1.500 9.500q14.500-14 29 0M6 14.500q10-10 20 0M10.500 19q5.500-5.500 11 0" /><circle cx="16" cy="22.500" r="1.600" fill="#111" /></Line>
);
const MuteIcon = () => (
  <Line w={30} h={24} c="#111" s={1.8}><path d="M13 2v20l-6-5H3q-2 0-2-2V9q0-2 2-2h4zM19 7l10 10M29 7L19 17" /></Line>
);
const BatteryIcon = () => (
  <Solid w={32} h={28}>
    <path d="M10 6h15q3 0 3 3v13q0 3-3 3H4q-3 0-3-3V12" fill="none" stroke="#111" strokeWidth="2" />
    <path d="M11 9h13q1.500 0 1.500 1.500v10q0 1.500-1.500 1.500H5q-1.500 0-1.500-1.500V18z" fill="#111" />
    <rect x="28" y="12" width="4" height="7" rx="1.500" fill="#111" />
    <path d="M6 0v6h4L4 16v-6H0z" fill="#111" stroke="#d8eaf4" strokeWidth="3" paintOrder="stroke" />
  </Solid>
);
const BellIcon = () => (
  <Solid w={26} h={30}><path d="M13 0q10 0 10 10v8l3 5v1.500H0V23l3-5v-8Q3 0 13 0z" fill="#164a5b" /><path d="M8 26h10q-1 4-5 4t-5-4z" fill="#164a5b" /></Solid>
);

/* ---------- data ---------- */
const TITLE = "财政部会计财务评价中心";
const tabs = [
  { title: "全国会计资格评价网 - 搜索", icon: <BlueSearch />, width: 406, lead: 26, slot: 46, fade: true },
  { title: TITLE, icon: <PageIcon />, width: 406, lead: 24, slot: 48 },
  { title: TITLE, icon: <Emblem />, width: 404, lead: 22, slot: 49, noRule: true },
  { title: TITLE, icon: <Emblem />, width: 408, lead: 24, slot: 49, active: true, noRule: true },
];

const firstFields = [
  { icon: <PinIcon />, top: 34, text: "广东省", cjk: true, select: true, drop: 3 },
  { icon: <PinIcon />, top: 34, text: "佛山市", cjk: true, select: true, drop: 3 },
  { icon: <MailIcon />, top: 40, text: "2912073970@qq.com", spacing: 0.1 },
  { icon: <GridIcon />, top: 38, text: "居民身份证", cjk: true, select: true, drop: 3 },
  { icon: <CardIcon />, top: 40, text: "130923200405116423", spacing: 0.25 },
  { icon: <PersonIcon />, top: 36, text: "于雅婷", cjk: true, drop: 3 },
];
const lastFields = [
  { icon: <PhoneIcon />, top: 34, text: "18028399660", spacing: 0.25 },
  { icon: <LockIcon />, top: 34, text: "•••••••••", spacing: 1.25, drop: 3 },
  { icon: <LockIcon />, top: 34, text: "•••••••••", spacing: 1.25, drop: 3 },
  { icon: <ShieldIcon />, top: 34, text: "n3fg", extra: <Captcha><CaptchaDrawing /></Captcha> },
  { icon: <ShieldIcon />, top: 34, text: "310132", spacing: 0.25, extra: <Resend>重新发送(262)</Resend> },
];
const sideApps = [SideSearch, SideTag, SideBox, SideGames, Side365, SideOutlook, SidePlane, SideTree];
const GRAY = "#7c868b";
const taskApps = [
  { Icon: TaskViewIcon },
  { Icon: FolderIcon, dot: GRAY },
  { Icon: EdgeIcon, dot: "#268193", wide: true, tint: "#ecf4f8", raised: true },
  { Icon: StoreIcon },
  { Icon: GreenBagIcon },
  { Icon: BoltIcon },
  { Icon: PdfIcon, dot: GRAY },
  { Icon: WeChatIcon, dot: "#c42b1c", tint: "#fbe6e8" },
  { Icon: MuIcon, dot: GRAY },
  { Icon: OneNoteIcon, dot: GRAY },
  { Icon: PptIcon, dot: GRAY },
  { Icon: ChatWindowIcon, dot: GRAY },
];

const Tab = ({ tab }) => (
  <TabBox $width={tab.width} $lead={tab.lead} $active={tab.active}>
    <TabIcon $width={tab.slot}>{tab.icon}</TabIcon>
    <TabTitle $fade={tab.fade}>{tab.title}</TabTitle>
    <TabClose><CloseIcon /></TabClose>
    <TabRule $hidden={tab.noRule} $collapsed={tab.noRule && !tab.active} />
  </TabBox>
);
const FormField = ({ f }) => (
  <Field>
    <FieldIcon $top={f.top}>{f.icon}</FieldIcon>
    <FieldText $select={f.select} $cjk={f.cjk} $spacing={f.spacing} $drop={f.drop}>{f.text}</FieldText>
    {f.select && <Chevron><SelectArrow /></Chevron>}
    {f.extra}
  </Field>
);

export default function App() {
  return (
    <Desktop>
      <Global />
      <TabStrip>
        <Avatar>
          <svg width="24" height="30" viewBox="0 0 24 30" fill="#8c8c8c"><circle cx="12" cy="7.500" r="7.200" /><path d="M2.500 17h19q2 0 2 2.500Q23 29 12 29T.5 19.500Q.5 17 2.500 17z" /></svg>
        </Avatar>
        <StripIcon $after={55}>
          <Line s={2.2}><rect x="15" y="10" width="16" height="20" rx="4" transform="skewY(-14) translate(0 5)" /><path d="M9 24q-1-1-1-3V12q0-3 3-4l11-3.500M4 20q-2-1-2-4V8q0-3 3-4L15 1.500" /></Line>
        </StripIcon>
        <StripIcon $after={46}>
          <svg width="28" height="28" viewBox="0 0 28 28"><rect x="1.200" y="1.200" width="25.600" height="25.600" rx="4" fill="none" stroke="#000" strokeWidth="2.400" /><path d="M1 8V5q0-4 4-4h18q4 0 4 4v3z" /><path d="M8 8v19" stroke="#000" strokeWidth="1.600" /></svg>
        </StripIcon>
        <TabGroup>
          <GroupLine />
          <GroupRow>
            <GroupChip>考试和测试</GroupChip>
            <Tab tab={{ title: "4T课证通", icon: <T4Icon />, width: 420, lead: 35, slot: 50 }} />
          </GroupRow>
        </TabGroup>
        {tabs.map((t, i) => <Tab key={i} tab={t} />)}
        <NewTab><Line w={28} h={28} s={2}><path d="M14 1v26M1 14h26" /></Line></NewTab>
        <WindowButtons>
          <Line w={20} h={20} s={2}><path d="M1 10h18" /></Line>
          <Line w={20} h={20} s={2}><rect x="1" y="5" width="14" height="14" rx="3" /><path d="M5 1.500h9q5 0 5 5v8" /></Line>
          <CloseIcon size={21} />
        </WindowButtons>
      </TabStrip>

      <Toolbar>
        <Line c="#c4c4c4" s={2}><path d="M15 3L2 16l13 13M2 16h30" /></Line>
        <ToolSlot $before={56}><Line s={2.4}><path d="M29 10A15 14.500 0 1 0 31 16M31 2v8h-9" /></Line></ToolSlot>
        <AddressBar>
          <Solid w={32} h={30}><path d="M14 1.500q2-3 4 0L31.500 27q1 3-2 3h-27q-3 0-2-3z" fill="#5f5f5f" /><rect x="14.700" y="9.500" width="2.600" height="10.500" rx="1.300" fill="#fff" /><circle cx="16" cy="24" r="1.700" fill="#fff" /></Solid>
          <Insecure>不安全</Insecure>
          <Rule $tone="#8f8f8f" />
          <Url><b>kzp.mof.gov.cn</b>/acc/system/base/register</Url>
          <AddressActions><KeyIcon /><SpeechIcon /><StarIcon /></AddressActions>
        </AddressBar>
        <ToolSlot $before={40}><PuzzleIcon /></ToolSlot>
        <ToolSlot $before={32}><Rule $tone="#cfcfcf" /></ToolSlot>
        <ToolSlot $before={31}><SplitIcon /></ToolSlot>
        <ToolSlot $before={57}><FavIcon /></ToolSlot>
        <ToolSlot $before={56}><CollectIcon /></ToolSlot>
        <ToolSlot $before={56}><HeartIcon /></ToolSlot>
        <ToolSlot $before={54}><Solid w={32} h={32}><circle cx="6" cy="16" r="2.600" /><circle cx="16" cy="16" r="2.600" /><circle cx="26" cy="16" r="2.600" /></Solid></ToolSlot>
      </Toolbar>

      <Body>
        <PageFrame>
          <PageArea>
            <FormColumn>
              {firstFields.map((f, i) => <FormField key={i} f={f} />)}
              <Hint>姓名中如含有生僻字请用两个半角下划线代替:__</Hint>
              {lastFields.map((f, i) => <FormField key={i} f={f} />)}
            </FormColumn>
          </PageArea>
          <ScrollTrack><ScrollThumb /></ScrollTrack>
        </PageFrame>
        <SideBar>
          <SideApps>{sideApps.map((Icon, i) => <Icon key={i} />)}</SideApps>
          <SideRule $margin="47px 0 51px" />
          <Line w={24} h={24} s={2}><path d="M12 0v24M0 12h24" /></Line>
          <SideGap />
          <SnipIcon />
          <SideRule $margin="27px 0" />
          <GearIcon />
        </SideBar>
      </Body>

      <TaskBar>
        <MoonIcon />
        <WeatherText>11°C<span>晴朗</span></WeatherText>
        <TraySlot $before={16}><StartIcon /></TraySlot>
        <SearchBox>
          <MagIcon />
          <SearchLabel>搜索</SearchLabel>
          <MountainArt />
        </SearchBox>
        <TaskApps>
          {taskApps.map(({ Icon, dot, wide, tint, raised }, i) => (
            <TaskSlot key={i} $tint={tint} $raised={raised}>
              <Icon />
              {dot && <RunDot $tone={dot} $wide={wide} />}
            </TaskSlot>
          ))}
        </TaskApps>
        <Tray>
          <Line w={21} h={13} c="#111" s={2.2}><path d="M1.500 11.500l9-9.500 9 9.500" /></Line>
          <TraySlot $before={38}><CloudIcon /></TraySlot>
          <TrayGlyph $before={32}>英</TrayGlyph>
          <TrayGlyph $before={47}>拼</TrayGlyph>
          <TraySlot $before={45}><WifiIcon /></TraySlot>
          <TraySlot $before={16}><MuteIcon /></TraySlot>
          <TraySlot $before={18}><BatteryIcon /></TraySlot>
          <Clock>19:55<br />2024/1/25</Clock>
          <BellIcon />
        </Tray>
      </TaskBar>
    </Desktop>
  );
}
